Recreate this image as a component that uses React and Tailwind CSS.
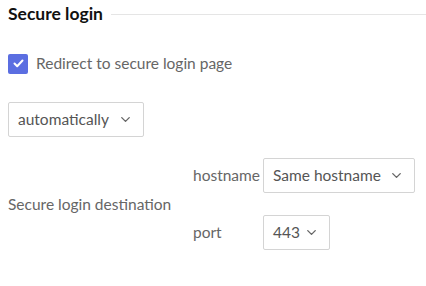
import { ChevronDown } from "lucide-react";

const Select = ({ value, width }) => (
  <div
    className={`flex h-[35px] items-center justify-between rounded-[2px] border border-[#d4d4d4] bg-white pl-[9px] pr-[10px] text-[15.5px] text-[#555] ${width}`}
  >
    <span>{value}</span>
    <ChevronDown size={15} strokeWidth={2.2} className="text-[#666]" />
  </div>
);

export default function App() {
  return (
    <div
      className="h-[286px] w-[426px] bg-white px-2 pt-[2px] text-[#666]"
      style={{ fontFamily: "Lato, 'Noto Sans', sans-serif" }}
    >
      <div className="-mr-2 flex items-center gap-[8px]">
        <h2 className="text-[17.5px] leading-[24px] font-bold text-[#111]">Secure login</h2>
        <div className="h-px flex-1 bg-[#e5e5e5]" />
      </div>

      <label className="mt-[26px] flex items-center gap-2 text-[15.5px]">
        <span className="flex h-5 w-5 items-center justify-center rounded-[2px] bg-[#5b6ee1]">
          <svg width="11" height="9" viewBox="0 0 11 9" fill="none">
            <path d="M1.5 4.5 L4.2 7.2 L9.5 1.5" stroke="white" strokeWidth="2" strokeLinecap="round" strokeLinejoin="round" />
          </svg>
        </span>
        Redirect to secure login page
      </label>

      <div className="mt-[27px]">
        <Select value="automatically" width="w-[136px]" />
      </div>

      <div className="mt-[21px] flex items-center text-[15.5px]">
        <div className="w-[185px]">Secure login destination</div>
        <div className="flex flex-col gap-[22px]">
          <div className="flex items-center">
            <span className="w-[70px]">hostname</span>
            <Select value="Same hostname" width="w-[152px]" />
          </div>
          <div className="flex items-center">
            <span className="w-[70px]">port</span>
            <Select value="443" width="w-[67px]" />
          </div>
        </div>
      </div>
    </div>
  );
}
